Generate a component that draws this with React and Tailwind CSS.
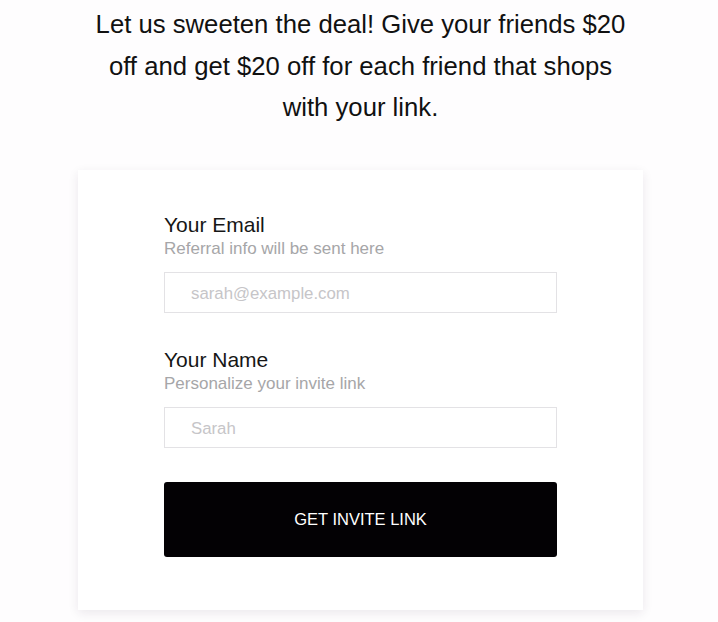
import React from 'react';

const Field = ({ label, hint, placeholder, type = 'text', className = '' }) => (
  <div className={className}>
    <label className="block text-[21px] leading-[24px] text-[#161616]">{label}</label>
    <p className="mt-[2px] text-[17px] leading-[20px] text-[#a6a6a8]">{hint}</p>
    <input
      type={type}
      placeholder={placeholder}
      className="mt-[13px] block h-[41px] w-full border border-[#e3e2e5] bg-white px-[26px] pt-[3px] text-[16.8px] text-[#333] placeholder:text-[#c6c5c8] outline-none"
    />
  </div>
);

export default function App() {
  return (
    <div className="min-h-[622px] bg-[#fefdfe] pl-[3px] font-['Liberation_Sans',Arial,sans-serif]">
      <h1 className="mx-auto w-[550px] pt-[4px] text-center text-[25.7px] leading-[41.5px] text-[#111]">
        Let us sweeten the deal! Give your friends $20 off and get $20 off for each friend that shops with your link.
      </h1>

      <div className="mx-auto mt-[41px] w-[565px] bg-white px-[86px] pt-[43px] pb-[53px] shadow-[0_3px_10px_rgba(40,20,60,0.09)]">
        <Field label="Your Email" hint="Referral info will be sent here" placeholder="sarah@example.com" type="email" />
        <Field className="mt-[35px]" label="Your Name" hint="Personalize your invite link" placeholder="Sarah" />
        <button className="mt-[34px] flex h-[75px] w-full items-center justify-center rounded-[3px] bg-[#030104] text-[16.5px] text-white">
          GET INVITE LINK
        </button>
      </div>
    </div>
  );
}
